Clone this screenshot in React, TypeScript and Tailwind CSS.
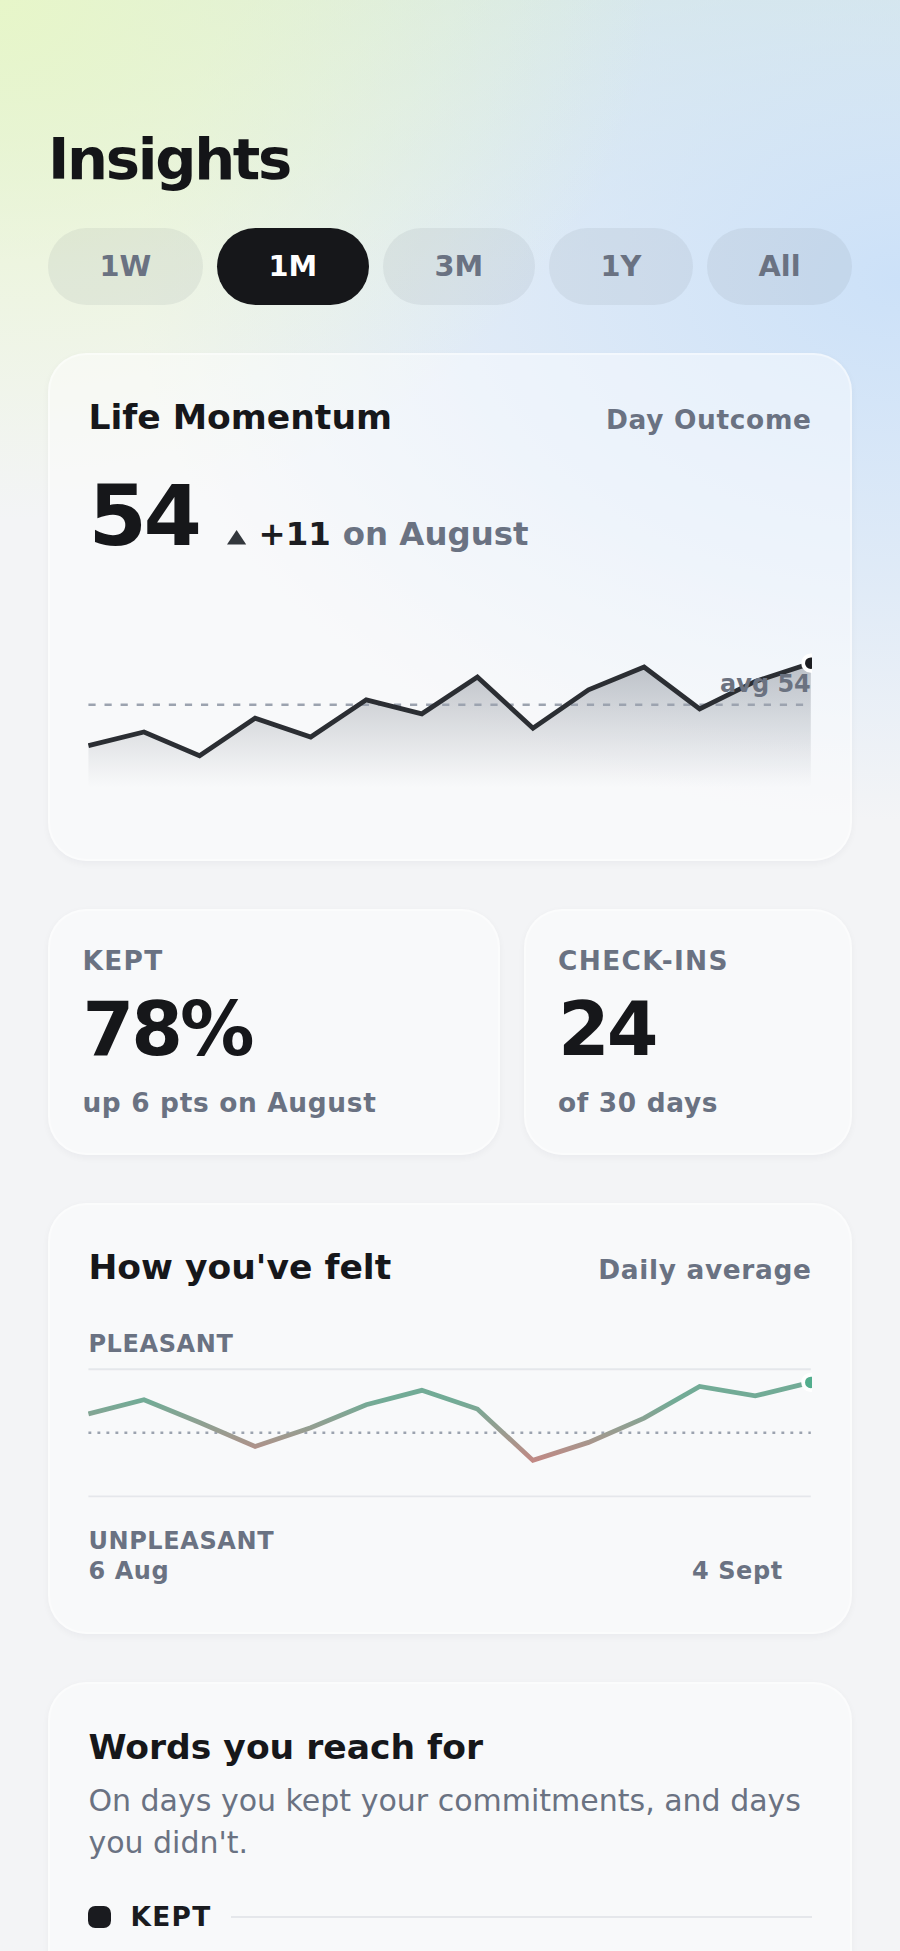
import React from "react";

const W = 301;

const momentum = [67.8, 62.1, 72, 56.3, 64.2, 48.7, 54.5, 39.2, 60.5, 44.5, 35, 52.5, 41, 33.4];
const mood = [19.1, 13.2, 22.7, 32.7, 24.9, 15.3, 9.3, 17.1, 38.5, 31, 20.9, 7.7, 11.6, 6];

function toPath(vals: number[]) {
  const step = W / (vals.length - 1);
  return vals
    .map((y, i) => `${i === 0 ? "M" : "L"}${(i * step).toFixed(2)},${y}`)
    .join(" ");
}

function MomentumChart() {
  const d = toPath(momentum);
  return (
    <svg viewBox="0 0 301 96" className="block h-24 w-full">
      <defs>
        <linearGradient id="momFill" x1="0" y1="30" x2="0" y2="85" gradientUnits="userSpaceOnUse">
          <stop offset="0" stopColor="#8e949d" stopOpacity="0.58" />
          <stop offset="1" stopColor="#8e949d" stopOpacity="0" />
        </linearGradient>
      </defs>
      <path d={`${d} L301,96 L0,96 Z`} fill="url(#momFill)" />
      <line x1="0" x2="301" y1="50.75" y2="50.75" stroke="#9ca3af" strokeWidth="1" strokeDasharray="3 3.7" />
      <path d={d} fill="none" stroke="#2b2e33" strokeWidth="2" strokeLinejoin="miter" />
      <text x="301" y="45.6" textAnchor="end" fontSize="10" fontWeight="700" fill="#6b7280">
        avg 54
      </text>
      <circle cx="301" cy="33.4" r="3.2" fill="#1c1d21" stroke="#ffffff" strokeWidth="1.6" />
    </svg>
  );
}

function MoodChart() {
  const d = toPath(mood);
  return (
    <svg viewBox="0 0 301 54" className="block h-[54px] w-full">
      <defs>
        <linearGradient id="moodStroke" x1="0" y1="0" x2="0" y2="54" gradientUnits="userSpaceOnUse">
          <stop offset="0.25" stopColor="#72ab96" />
          <stop offset="0.5" stopColor="#9a9c90" />
          <stop offset="0.72" stopColor="#c28884" />
        </linearGradient>
      </defs>
      <line x1="0" x2="301" y1="0.5" y2="0.5" stroke="#e5e7eb" strokeWidth="0.8" />
      <line x1="0" x2="301" y1="53.5" y2="53.5" stroke="#e5e7eb" strokeWidth="0.8" />
      <line x1="0" x2="301" y1="27" y2="27" stroke="#9ca3af" strokeWidth="1" strokeDasharray="1.2 2.55" />
      <path d={d} fill="none" stroke="url(#moodStroke)" strokeWidth="2" />
      <circle cx="301" cy="6" r="3.2" fill="#52ad8d" stroke="#ffffff" strokeWidth="1.6" />
    </svg>
  );
}

function CardHeader({ title, right }: { title: string; right: string }) {
  return (
    <div className="flex items-baseline justify-between">
      <div className="text-[14.4px] leading-5 font-bold text-[#16171a]">{title}</div>
      <div className="text-[11px] font-bold tracking-wide text-gray-500">{right}</div>
    </div>
  );
}

function StatCard({ label, value, sub }: { label: string; value: string; sub: string }) {
  return (
    <div className="flex-auto rounded-2xl border border-white/40 bg-white/45 px-[13.5px] pt-[14px] pb-[14px] shadow-[0_1px_3px_rgba(15,23,42,0.04)]">
      <div className="text-[11px] leading-[14px] font-bold tracking-wider text-gray-500">{label}</div>
      <div className="mt-1.5 text-[31px] leading-8 font-bold tracking-[-0.04em] text-[#16171a]">{value}</div>
      <div className="mt-[7px] text-[11px] leading-[14px] font-bold tracking-wide text-gray-500">{sub}</div>
    </div>
  );
}

const tabs = ["1W", "1M", "3M", "1Y", "All"];

export default function App() {
  return (
    <div className="min-h-screen w-full bg-[#f3f4f6] [background-image:radial-gradient(ellipse_650px_520px_at_0px_0px,#e7f6c9_0%,rgba(231,246,201,0)_100%),radial-gradient(ellipse_850px_600px_at_900px_280px,#cce1f8_0%,rgba(204,225,248,0.5)_50%,rgba(204,225,248,0)_90%),linear-gradient(to_bottom,#dfece4_0px,rgba(223,236,228,0)_260px)] font-['DejaVu_Sans',sans-serif] text-[#16171a]">
      <div className="w-[375px] px-5 pt-[51px] pb-10 [zoom:2.4]">
        <h1 className="text-2xl leading-8 font-bold tracking-[-0.04em] text-[#141518]">Insights</h1>

        <div className="mt-3 flex gap-1.5">
          {tabs.map((t) =>
            t === "1M" ? (
              <div
                key={t}
                className="flex h-8 flex-auto items-center justify-center rounded-full bg-[#16171a] px-2 text-xs font-bold text-white"
              >
                {t}
              </div>
            ) : (
              <div
                key={t}
                className="flex h-8 flex-auto items-center justify-center rounded-full bg-gray-500/10 px-2 text-xs font-bold text-gray-500"
              >
                {t}
              </div>
            )
          )}
        </div>

        {/* Life Momentum */}
        <div className="mt-5 rounded-2xl border border-white/40 bg-white/45 px-4 pt-4 pb-[19px] shadow-[0_1px_3px_rgba(15,23,42,0.04)]">
          <CardHeader title="Life Momentum" right="Day Outcome" />
          <div className="mt-[11px] flex items-baseline">
            <span className="text-[35px] leading-10 font-bold tracking-[-0.04em] text-[#16171a]">54</span>
            <svg viewBox="0 0 8 6" className="ml-3 h-[6px] w-2" aria-hidden="true">
              <path d="M4 0 L8 6 L0 6 Z" fill="#33373c" />
            </svg>
            <span className="ml-[5px] text-[13.5px] font-bold text-[#1c1d21]">+11</span>
            <span className="ml-[5px] text-[13.5px] font-bold text-gray-500">on August</span>
          </div>
          <div className="mt-2">
            <MomentumChart />
          </div>
        </div>

        {/* Stats */}
        <div className="mt-5 flex gap-2.5">
          <StatCard label="KEPT" value="78%" sub="up 6 pts on August" />
          <StatCard label="CHECK-INS" value="24" sub="of 30 days" />
        </div>

        {/* How you've felt */}
        <div className="mt-5 rounded-2xl border border-white/40 bg-white/45 px-4 pt-4 pb-[18px] shadow-[0_1px_3px_rgba(15,23,42,0.04)]">
          <CardHeader title="How you've felt" right="Daily average" />
          <div className="mt-4 text-[10px] leading-3 font-bold tracking-wide text-gray-500">PLEASANT</div>
          <div className="mt-1">
            <MoodChart />
          </div>
          <div className="mt-3 text-[10px] leading-3 font-bold tracking-wide text-gray-500">UNPLEASANT</div>
          <div className="flex justify-between pr-3 text-[10px] leading-[14px] font-bold tracking-wide text-gray-500">
            <span>6 Aug</span>
            <span>4 Sept</span>
          </div>
        </div>

        {/* Words you reach for */}
        <div className="mt-5 rounded-2xl border border-white/40 bg-white/45 p-4 shadow-[0_1px_3px_rgba(15,23,42,0.04)]">
          <div className="text-[14.4px] leading-5 font-bold text-[#16171a]">Words you reach for</div>
          <p className="mt-1 text-[12.5px] leading-[17.5px] text-gray-500">
            On days you kept your commitments, and days you didn't.
          </p>
          <div className="mt-4 flex h-3 items-center gap-2">
            <span className="h-[9.5px] w-[9.5px] rounded-[3px] bg-[#1a1b1f]" />
            <span className="text-[11px] leading-3 font-bold tracking-wider text-[#1a1b1f]">KEPT</span>
            <span className="h-px flex-1 bg-gray-200" />
          </div>
          <div className="mt-5 h-40" />
        </div>
      </div>
    </div>
  );
}
